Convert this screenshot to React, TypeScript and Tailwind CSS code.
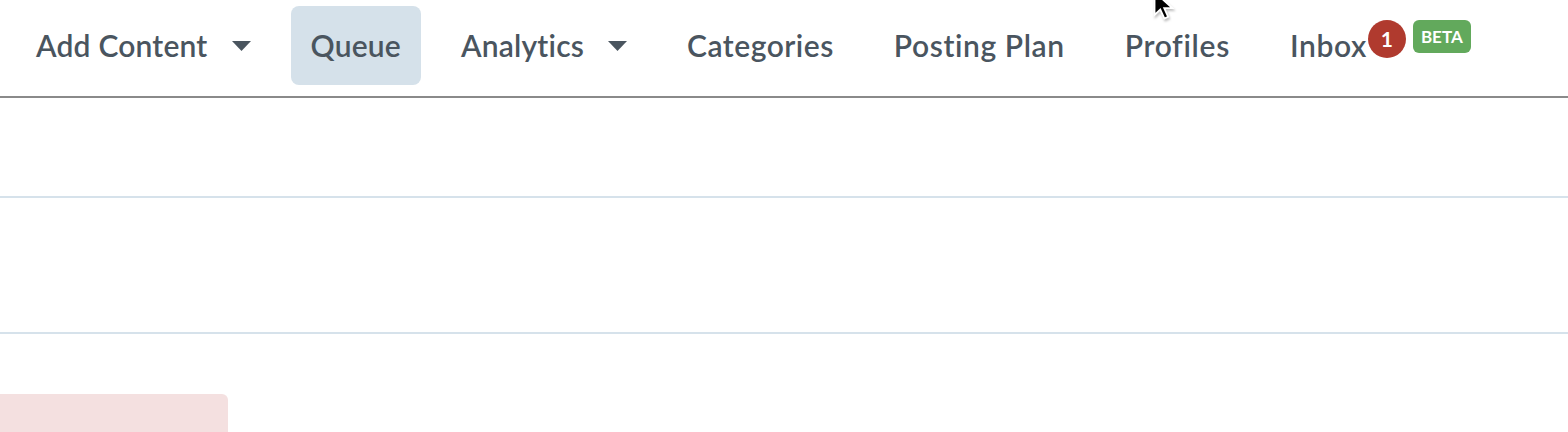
import { ReactNode } from 'react'

// tracking tuned per item so Lato lines up with the original's wider face
const NAV = [
  { label: 'Add Content', caret: true, track: 'tracking-[0.2px]' },
  { label: 'Queue', active: true, track: 'tracking-[0.2px]' },
  { label: 'Analytics', caret: true, track: 'tracking-[0.2px]' },
  { label: 'Categories', track: 'tracking-[0.5px]' },
  { label: 'Posting Plan', track: 'tracking-[0.6px]' },
  { label: 'Profiles', track: 'tracking-[0.7px]' },
]

function Caret() {
  return (
    <svg width="19" height="10" viewBox="0 0 19 10" className="ml-6">
      <path d="M0 0h19L9.5 10z" fill="#4a555f" />
    </svg>
  )
}

function NavItem({ children, active }: { children: ReactNode; active?: boolean }) {
  return (
    <div
      className={
        'flex h-[79px] items-center rounded-lg px-5 ' + (active ? 'bg-[#d5e1ea]' : '')
      }
    >
      {children}
    </div>
  )
}

function Cursor() {
  return (
    <svg width="28" height="32" viewBox="0 0 22 24" className="absolute left-[1152px] top-[-10px] drop-shadow-[1px_2px_1px_rgba(0,0,0,0.25)]">
      <path d="M2 1v18l4.5-4.2 3.2 7 3-1.3-3.1-6.8H16z" fill="#000" stroke="#fff" strokeWidth="1.4" />
    </svg>
  )
}

export default function App() {
  return (
    <div className="relative h-[432px] w-[1568px] overflow-hidden bg-white font-['Lato',sans-serif] text-[#4a555f]">
      {/* top nav */}
      <div className="flex h-[98px] items-start gap-5 border-b-2 border-[#8a8a8a] pl-4 pt-[6px]">
        {NAV.map(n => (
          <NavItem key={n.label} active={n.active}>
            <span className={'text-[30px] font-semibold ' + n.track}>{n.label}</span>
            {n.caret && <Caret />}
          </NavItem>
        ))}
        <NavItem>
          <span className="text-[30px] font-semibold tracking-[0.6px]">Inbox</span>
          <span className="ml-[1px] -mt-[14px] flex h-[38px] w-[38px] items-center justify-center rounded-full bg-[#b03a2e] text-[21px] font-bold text-white">
            1
          </span>
          <span className="ml-[7px] -mt-[18px] flex h-[33px] items-center rounded-md bg-[#62a95c] px-[8px] text-[17px] font-bold text-white">
            BETA
          </span>
        </NavItem>
      </div>

      {/* content rows */}
      <div className="h-[100px] border-b-2 border-[#d6e2eb]" />
      <div className="h-[136px] border-b-2 border-[#d6e2eb]" />
      <div className="pt-[60px]">
        <div className="h-[40px] w-[228px] rounded-tr-md bg-[#f4e0e0]" />
      </div>

      <Cursor />
    </div>
  )
}
